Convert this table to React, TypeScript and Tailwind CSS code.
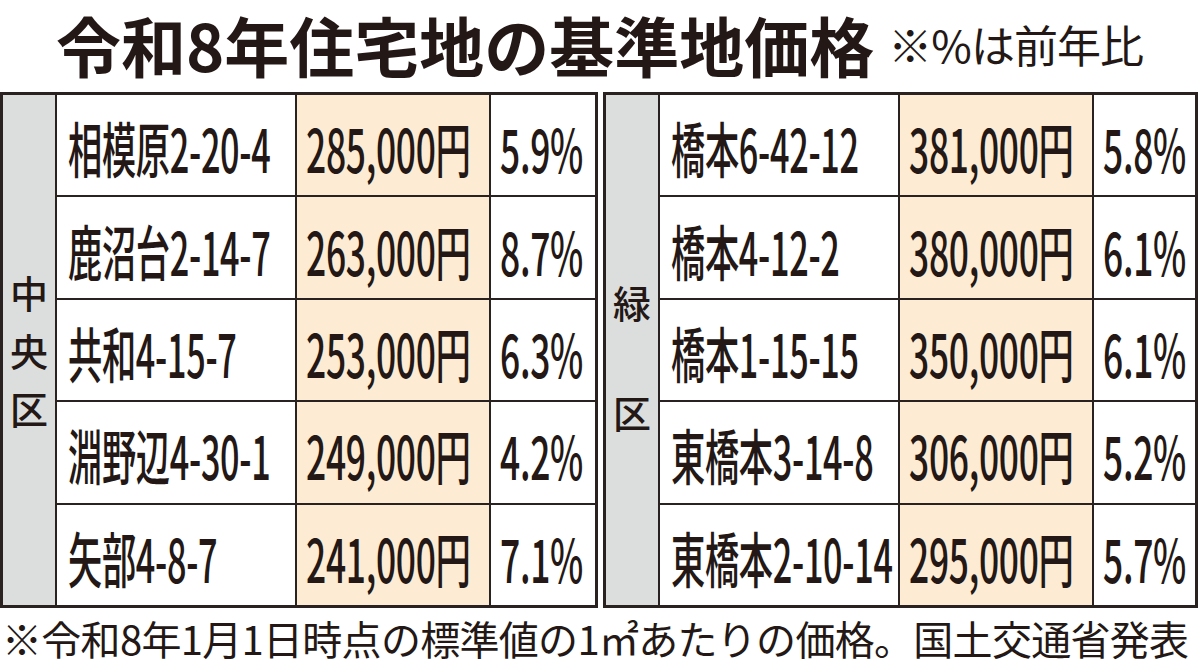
import React from "react";

type Row = { name: string; price: string; pct: string };

const chuo: Row[] = [
  { name: "相模原2-20-4", price: "285,000円", pct: "5.9%" },
  { name: "鹿沼台2-14-7", price: "263,000円", pct: "8.7%" },
  { name: "共和4-15-7", price: "253,000円", pct: "6.3%" },
  { name: "淵野辺4-30-1", price: "249,000円", pct: "4.2%" },
  { name: "矢部4-8-7", price: "241,000円", pct: "7.1%" },
];

const midori: Row[] = [
  { name: "橋本6-42-12", price: "381,000円", pct: "5.8%" },
  { name: "橋本4-12-2", price: "380,000円", pct: "6.1%" },
  { name: "橋本1-15-15", price: "350,000円", pct: "6.1%" },
  { name: "東橋本3-14-8", price: "306,000円", pct: "5.2%" },
  { name: "東橋本2-10-14", price: "295,000円", pct: "5.7%" },
];

const font = { fontFamily: '"Noto Sans CJK JP", "Noto Sans", sans-serif' };

function Cond({ children, narrow }: { children: React.ReactNode; narrow?: boolean }) {
  return (
    <span
      className={`inline-block origin-left whitespace-nowrap text-[60px] leading-none font-medium tracking-[-0.5px] ${
        narrow ? "scale-x-[0.57]" : "scale-x-[0.59]"
      }`}
    >
      {children}
    </span>
  );
}

function Table({
  rows,
  label,
  width,
}: {
  rows: Row[];
  label: React.ReactNode;
  width: string;
}) {
  return (
    <div className={`flex shrink-0 min-w-0 border-[3px] border-[#2a2220] h-full ${width}`}>
      <div className="w-[54px] shrink-0 bg-[#dcdddd] border-r-[2px] border-[#2a2220] flex flex-col items-center justify-center">
        {label}
      </div>
      <div className="flex-1 min-w-0 flex flex-col">
        {rows.map((r, i) => (
          <div
            key={i}
            className={`flex flex-1 min-w-0 ${i < rows.length - 1 ? "border-b-[2px] border-[#2a2220]" : ""}`}
          >
            <div className="w-[238px] shrink-0 min-w-0 flex items-center pl-[11px] pt-[4px]">
              <Cond narrow>{r.name}</Cond>
            </div>
            <div className="w-[196px] shrink-0 min-w-0 bg-[#fdebd3] border-x-[2px] border-[#2a2220] flex items-center pl-[9px] pt-[4px]">
              <Cond>{r.price}</Cond>
            </div>
            <div className="flex-1 min-w-0 flex items-center pl-[9px] pt-[4px]">
              <Cond>{r.pct}</Cond>
            </div>
          </div>
        ))}
      </div>
    </div>
  );
}

export default function App() {
  return (
    <div className="w-[1200px] h-[672px] bg-white text-[#231815] flex flex-col overflow-hidden" style={font}>
      <div className="h-[92px] shrink-0 flex items-center pl-[56px] pb-[4px]">
        <span className="text-[65px] font-bold leading-[1.2] whitespace-nowrap">令和8年住宅地の基準地価格</span>
        <span className="text-[44px] leading-[1.2] ml-[14px] tracking-[-1px] whitespace-nowrap">※%は前年比</span>
      </div>
      <div className="h-[516px] shrink-0 flex gap-[5px]">
        <Table
          width="w-[598px]"
          rows={chuo}
          label={
            <div className="flex flex-col items-center text-[38px] leading-[58px] font-medium">
              <span>中</span>
              <span>央</span>
              <span>区</span>
            </div>
          }
        />
        <Table
          width="w-[595px]"
          rows={midori}
          label={
            <div className="flex flex-col items-center text-[38px] leading-none font-medium gap-[72px] mt-[14px]">
              <span>緑</span>
              <span>区</span>
            </div>
          }
        />
      </div>
      <div className="flex-1 flex items-center pl-[2px] pb-[4px]">
        <span className="text-[40px] leading-none whitespace-nowrap tracking-[-0.7px]">
          ※令和8年1月1日時点の標準値の1㎡あたりの価格。国土交通省発表
        </span>
      </div>
    </div>
  );
}
